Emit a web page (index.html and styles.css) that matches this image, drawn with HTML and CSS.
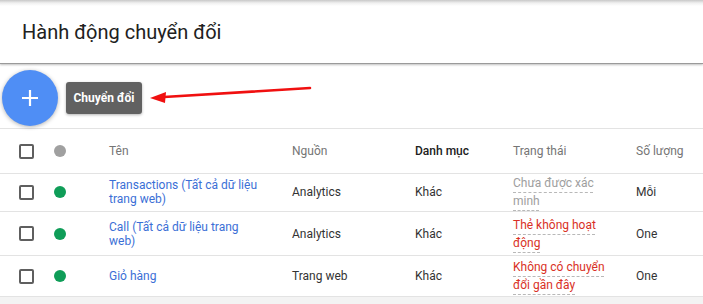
FILE: index.html
```html
<!DOCTYPE html>
<html lang="vi">
<head>
  <meta charset="UTF-8">
  <meta name="viewport" content="width=device-width, initial-scale=1.0">
  <title>Hành động chuyển đổi</title>
  <link rel="stylesheet" href="styles.css">
</head>
<body>
  <div class="page-header">
    <h1>Hành động chuyển đổi</h1>
  </div>

  <!-- Barre d'outils avec le bouton + et l'info-bulle -->
  <div class="toolbar">
    <button class="fab" type="button">
      <svg width="18" height="18" viewBox="0 0 18 18"><path d="M9 1v16M1 9h16" stroke="#fff" stroke-width="2.2"/></svg>
    </button>
    <div class="tooltip">Chuyển đổi</div>
    <svg class="arrow" width="170" height="30" viewBox="0 0 170 30">
      <path d="M160 2 L14 11" stroke="#f01010" stroke-width="2.6" stroke-linecap="round"/>
      <path d="M0 12 L16 6 L15 17 Z" fill="#f01010"/>
    </svg>
  </div>

  <div class="table">
    <div class="row head">
      <span class="box"></span>
      <span class="dot gray"></span>
      <span class="cell">Tên</span>
      <span class="cell">Nguồn</span>
      <span class="cell strong">Danh mục</span>
      <span class="cell">Trạng thái</span>
      <span class="cell">Số lượng</span>
    </div>
    <div class="row r1">
      <span class="box"></span>
      <span class="dot green"></span>
      <span class="cell name">Transactions (Tất cả dữ liệu trang web)</span>
      <span class="cell text">Analytics</span>
      <span class="cell text">Khác</span>
      <span class="cell status muted"><span>Chưa được xác minh</span></span>
      <span class="cell text">Mỗi</span>
    </div>
    <div class="row r2">
      <span class="box"></span>
      <span class="dot green"></span>
      <span class="cell name">Call (Tất cả dữ liệu trang web)</span>
      <span class="cell text">Analytics</span>
      <span class="cell text">Khác</span>
      <span class="cell status alert"><span>Thẻ không hoạt động</span></span>
      <span class="cell text">One</span>
    </div>
    <div class="row r3">
      <span class="box"></span>
      <span class="dot green"></span>
      <span class="cell name">Giỏ hàng</span>
      <span class="cell text">Trang web</span>
      <span class="cell text">Khác</span>
      <span class="cell status alert"><span>Không có chuyển đổi gần đây</span></span>
      <span class="cell text">One</span>
    </div>
  </div>
  <div class="footer"></div>
</body>
</html>
```

FILE: styles.css
```css
body {
  margin: 0;
  font-family: Roboto, 'Liberation Sans', sans-serif;
  background-color: #fff;
  color: #333;
}

.page-header {
  height: 63px;
  background: linear-gradient(#c8c8c8 0, #f0f0f0 3px, #fff 6px);
  border-bottom: 1px solid #9a9a9a;
  box-shadow: 0 1px 2px rgba(0, 0, 0, 0.25);
  display: flex;
  align-items: center;
  padding-left: 22px;
  position: relative;
  z-index: 1;
}
.page-header h1 {
  margin: 0;
  font-size: 20px;
  font-weight: 400;
  color: #212121;
  padding-top: 1px;
}

.toolbar {
  height: 64px;
  border-bottom: 1px solid #e3e3e3;
  display: flex;
  align-items: center;
  position: relative;
}
.fab {
  width: 56px;
  height: 56px;
  margin-left: 2px;
  margin-top: 3px;
  border: none;
  border-radius: 50%;
  background-color: #4f8ef5;
  box-shadow: 0 1px 4px rgba(0, 0, 0, 0.3);
  display: flex;
  align-items: center;
  justify-content: center;
  padding: 0;
}
.tooltip {
  margin-left: 8px;
  margin-top: 3px;
  height: 32px;
  width: 76px;
  box-sizing: border-box;
  background-color: #616161;
  color: #fff;
  border-radius: 3px;
  font-size: 12px;
  font-weight: 700;
  display: flex;
  align-items: center;
  justify-content: center;
  box-shadow: 0 1px 3px rgba(0, 0, 0, 0.3);
}
.arrow {
  position: absolute;
  left: 150px;
  top: 22px;
}

.row {
  display: grid;
  grid-template-columns: 35px 55px 183px 123px 98px 123px 1fr;
  align-items: center;
  padding-left: 19px;
  border-bottom: 1px solid #e3e3e3;
  font-size: 12px;
}
.row.head {
  height: 44px;
  color: #757575;
}
.row.r1 {
  height: 26px;
  padding-bottom: 11px;
}
.row.r2 {
  height: 43px;
}
.row.r3 {
  height: 40px;
}
.strong {
  color: #212121;
  font-weight: 500;
}
.box {
  width: 11px;
  height: 11px;
  border: 2px solid #5f5f5f;
  border-radius: 2px;
}
.dot {
  width: 12px;
  height: 12px;
  border-radius: 50%;
}
.dot.gray {
  background-color: #a0a0a0;
}
.dot.green {
  background-color: #0f9d58;
}
.cell.name {
  color: #3b6fd6;
  max-width: 156px;
  line-height: 14px;
}
.cell.text {
  color: #333;
}
.cell.status {
  max-width: 98px;
  line-height: 18px;
}
.cell.status span {
  text-decoration-line: underline;
  text-decoration-style: dashed;
  text-decoration-color: #b8b8b8;
  text-decoration-thickness: 1px;
  text-underline-offset: 5px;
}
.muted {
  color: #9e9e9e;
}
.alert {
  color: #d93025;
}

.footer {
  height: 8px;
  background-color: #f3f3f3;
}
```
